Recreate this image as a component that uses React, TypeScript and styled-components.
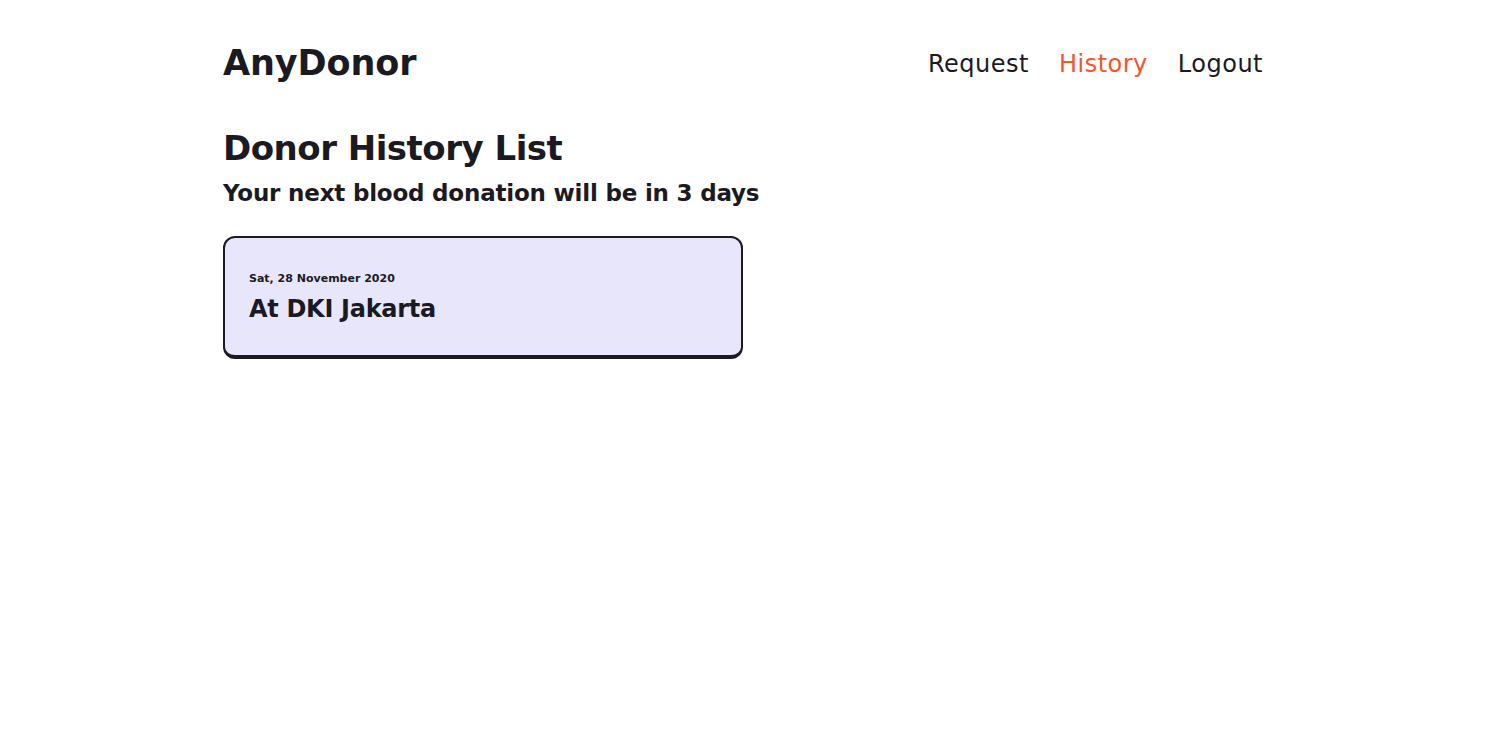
import React from "react";
import styled, { createGlobalStyle } from "styled-components";

const Global = createGlobalStyle`
  html, body { margin: 0; padding: 0; background: #ffffff; }
  body { font-family: "DejaVu Sans", "Open Sans", sans-serif; color: #1b1a22; }
  * { box-sizing: border-box; }
`;

const Page = styled.div`
  max-width: 1040px;
  margin: 0 auto;
  padding-top: 40px;
`;

const Header = styled.header`
  display: flex;
  align-items: center;
  justify-content: space-between;
  height: 46px;
`;

const Logo = styled.h1`
  margin: 0;
  font-size: 35px;
  font-weight: 800;
  letter-spacing: -0.1px;
`;

const Nav = styled.nav`
  display: flex;
  gap: 30px;
  padding-top: 2px;
`;

const NavLink = styled.a<{ $active?: boolean }>`
  font-size: 24px;
  font-weight: 400;
  letter-spacing: 0.5px;
  color: ${(p) => (p.$active ? "#f4552b" : "#1b1a22")};
  text-decoration: none;
  cursor: pointer;
`;

const Title = styled.h2`
  margin: 38px 0 0;
  font-size: 34px;
  font-weight: 700;
  line-height: 48px;
  letter-spacing: -0.5px;
`;

const Subtitle = styled.h3`
  margin: 5px 0 0;
  font-size: 23px;
  font-weight: 800;
  line-height: 32px;
  letter-spacing: -0.2px;
`;

const List = styled.div`
  display: flex;
  flex-direction: column;
  gap: 16px;
  margin-top: 27px;
`;

const Card = styled.div`
  width: 520px;
  height: 123px;
  background: #e8e6fb;
  border: 2px solid #1b1a22;
  border-bottom-width: 4px;
  border-radius: 12px;
  padding: 33px 24px 0;
`;

const CardDate = styled.div`
  font-size: 11px;
  font-weight: 700;
  line-height: 16px;
`;

const CardPlace = styled.div`
  margin-top: 7px;
  font-size: 24px;
  font-weight: 800;
  line-height: 30px;
  letter-spacing: -0.3px;
`;

export default function App() {
  return (
    <>
      <Global />
      <Page>
        <Header>
          <Logo>AnyDonor</Logo>
          <Nav>
            <NavLink>Request</NavLink>
            <NavLink $active>History</NavLink>
            <NavLink>Logout</NavLink>
          </Nav>
        </Header>
        <Title>Donor History List</Title>
        <Subtitle>Your next blood donation will be in 3 days</Subtitle>
        <List>
          <Card>
            <CardDate>Sat, 28 November 2020</CardDate>
            <CardPlace>At DKI Jakarta</CardPlace>
          </Card>
        </List>
      </Page>
    </>
  );
}
